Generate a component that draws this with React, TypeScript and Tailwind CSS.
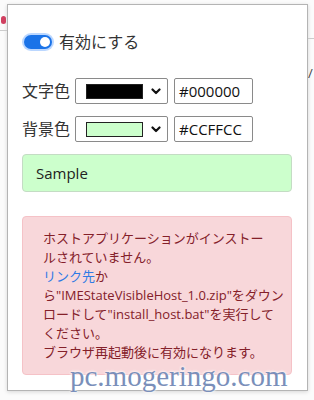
import React from "react";

function Chevron() {
  return (
    <svg width="10" height="7" viewBox="0 0 10 7" className="flex-none">
      <path d="M1.5 1.5 L5 5 L8.5 1.5" fill="none" stroke="#111" strokeWidth="2.2" strokeLinecap="round" strokeLinejoin="round" />
    </svg>
  );
}

function ColorRow({ label, color, hex }: { label: string; color: string; hex: string }) {
  return (
    <div className="flex items-center">
      <span className="w-[53px] text-[16px] leading-none text-[#333]">{label}</span>
      <div className="flex h-[26px] w-[93px] items-center rounded-[2px] border border-[#8a8a8a] bg-white pl-[10px] pr-[6px]">
        <span className="h-[15px] w-[57px] border border-[#222]" style={{ backgroundColor: color }} />
        <span className="flex-1" />
        <Chevron />
      </div>
      <div className="ml-[6px] flex h-[26px] w-[79px] items-center rounded-[2px] border border-[#8a8a8a] bg-white pl-[4px] text-[15px] text-[#111]">
        {hex}
      </div>
    </div>
  );
}

export default function App() {
  return (
    <div
      className="relative h-[400px] w-[314px] overflow-hidden bg-[#fbfbfb]"
      style={{ fontFamily: '"Open Sans", "Noto Sans CJK JP", sans-serif' }}
    >
      {/* page behind the popup */}
      <span className="absolute left-[1px] top-[16px] h-[8px] w-[5px] rounded-full bg-[#d04060]" />
      <span className="absolute left-0 top-[30px] h-px w-[7px] bg-[#ccc]" />
      <span className="absolute left-[308px] top-[38px] h-px w-[6px] bg-[#ccc]" />
      <span className="absolute left-[308px] top-[64px] text-[13px] text-[#444]">/</span>

      <div className="ml-[7px] mt-[4px] h-[387px] w-[301px] border border-[#b4b4b4] bg-white px-[14px] pt-[28px] shadow-[0_1px_4px_rgba(0,0,0,0.15)]">
        <div className="flex items-center">
          <div className="ml-[2px] flex h-[14px] w-[28px] items-center justify-end rounded-full bg-[#1a73e8] pr-[2px] shadow-[0_0_0_2px_rgba(60,140,255,0.35)]">
            <span className="h-[10px] w-[10px] rounded-full bg-white" />
          </div>
          <span className="ml-[7px] text-[16px] leading-[18px] text-[#333]">有効にする</span>
        </div>

        <div className="mt-[27px] flex flex-col gap-[12px]">
          <ColorRow label="文字色" color="#000000" hex="#000000" />
          <ColorRow label="背景色" color="#CCFFCC" hex="#CCFFCC" />
        </div>

        <div className="mt-[12px] flex h-[38px] w-[270px] items-center rounded-[4px] border border-[#c4dcc4] bg-[#ccffcc] pl-[13px] text-[15px] text-[#222]">
          Sample
        </div>

        <div className="mt-[24px] w-[270px] rounded-[4px] border border-[#f5c2c7] bg-[#f8d7da] px-[20px] py-[12px] text-[13px] leading-[19px] text-[#842029]">
          <span className="block whitespace-nowrap">ホストアプリケーションがインストー</span>
          <span className="block whitespace-nowrap">ルされていません。</span>
          <span className="block whitespace-nowrap">
            <span className="text-[#2f7ae5]">リンク先</span>か
          </span>
          <span className="block whitespace-nowrap">ら"IMEStateVisibleHost_1.0.zip"をダウン</span>
          <span className="block whitespace-nowrap">ロードして"install_host.bat"を実行して</span>
          <span className="block whitespace-nowrap">ください。</span>
          <span className="block whitespace-nowrap">ブラウザ再起動後に有効になります。</span>
        </div>
      </div>

      {/* watermark */}
      <span
        className="absolute left-[70px] top-[362px] text-[29px] leading-[29px] text-[#7a8fba]"
        style={{ fontFamily: '"Liberation Serif", serif', textShadow: "0 0 3px #fff, 0 0 3px #fff" }}
      >
        pc.mogeringo.com
      </span>
    </div>
  );
}
